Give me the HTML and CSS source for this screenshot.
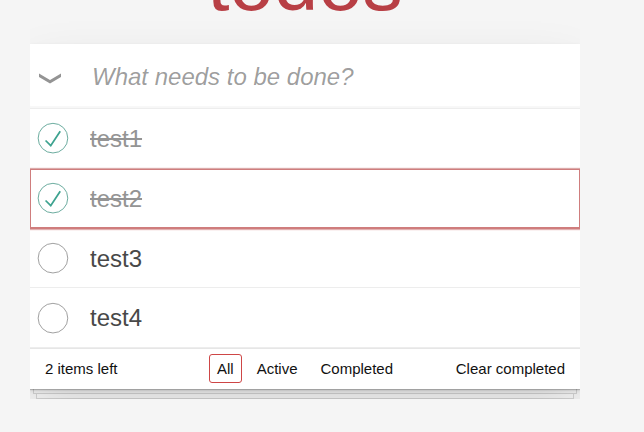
FILE: index.html
```html
<!DOCTYPE html>
<html lang="en">
<head>
<meta charset="utf-8">
<title>todos</title>
<link rel="stylesheet" href="styles.css">
</head>
<body>
<header class="title-area">
  <h1 class="title">todos</h1>
</header>
<section class="todoapp">
  <div class="entry">
    <span class="toggle-all" aria-label="Mark all as complete">
      <svg width="24" height="13" viewBox="0 0 24 13"><path d="M1 1.5 L12 8 L23 1.5 L23 5 L12 11.5 L1 5 Z" fill="#949494"/></svg>
    </span>
    <input class="new-todo" placeholder="What needs to be done?">
  </div>
  <ul class="todo-list">
    <li class="item completed">
      <span class="toggle"><svg width="40" height="40" viewBox="-10 -18 100 135"><circle cx="50" cy="50" r="50" fill="none" stroke="#59A193" stroke-width="3"/><path fill="#3EA390" d="M72 25L42 71 27 56l-4 4 20 20 34-52z"/></svg></span>
      <label class="text">test1</label>
    </li>
    <li class="item completed focused">
      <span class="toggle"><svg width="40" height="40" viewBox="-10 -18 100 135"><circle cx="50" cy="50" r="50" fill="none" stroke="#59A193" stroke-width="3"/><path fill="#3EA390" d="M72 25L42 71 27 56l-4 4 20 20 34-52z"/></svg></span>
      <label class="text">test2</label>
    </li>
    <li class="item">
      <span class="toggle"><svg width="40" height="40" viewBox="-10 -18 100 135"><circle cx="50" cy="50" r="50" fill="none" stroke="#949494" stroke-width="3"/></svg></span>
      <label class="text">test3</label>
    </li>
    <li class="item">
      <span class="toggle"><svg width="40" height="40" viewBox="-10 -18 100 135"><circle cx="50" cy="50" r="50" fill="none" stroke="#949494" stroke-width="3"/></svg></span>
      <label class="text">test4</label>
    </li>
  </ul>
  <footer class="footer">
    <span class="todo-count"><strong class="count">2</strong> items left</span>
    <ul class="filters">
      <li><a class="filter selected" href="#/">All</a></li>
      <li><a class="filter" href="#/active">Active</a></li>
      <li><a class="filter" href="#/completed">Completed</a></li>
    </ul>
    <span class="clear-completed">Clear completed</span>
  </footer>
</section>
<div class="sheet sheet-1"></div>
<div class="sheet sheet-2"></div>
</body>
</html>
```
FILE: styles.css
```css
html, body {
  padding: 0;
}
body {
  margin: 0 0 0 30px;
  width: 550px;
  font: 14px "Liberation Sans", Arial, sans-serif;
  line-height: 1.4em;
  background: #f5f5f5;
  color: #111111;
}
.title-area {
  display: flow-root;
  height: 44px;
}
.title {
  margin: -57px 0 0;
  font-size: 80px;
  line-height: 80px;
  font-weight: 400;
  text-align: center;
  color: #b83f45;
}
.todoapp {
  position: relative;
  z-index: 1;
  background: #fff;
  box-shadow: 0 1px 1px rgba(0, 0, 0, 0.2), 0 2px 4px 0 rgba(0, 0, 0, 0.12), 0 25px 50px 0 rgba(0, 0, 0, 0.12);
}
.entry {
  display: flex;
  align-items: center;
  height: 65px;
  box-shadow: inset 0 -2px 1px rgba(0, 0, 0, 0.03);
  border-bottom: 1px solid #ededed;
  box-sizing: border-box;
}
.toggle-all {
  width: 60px;
  height: 65px;
  display: flex;
  align-items: center;
  justify-content: flex-start;
  padding: 5px 0 0 8px;
  box-sizing: border-box;
}
.toggle-all svg {
  display: block;
}
.new-todo {
  flex: 1;
  border: none;
  outline: none;
  background: transparent;
  font-family: inherit;
  font-size: 24px;
  line-height: 1.4em;
  padding: 2px 16px 0 2px;
  color: #111;
}
.new-todo::placeholder {
  font-style: italic;
  font-weight: 400;
  color: rgba(0, 0, 0, 0.4);
}
.todo-list {
  margin: 0;
  padding: 0;
  list-style: none;
}
.item {
  display: flex;
  align-items: center;
  font-size: 24px;
  border-bottom: 1px solid #ededed;
}
.item.focused {
  border-bottom-color: #cf7d7d;
  box-shadow: inset 0 0 0 1px #cf7d7d, 0 0 1px 1px rgba(207, 125, 125, 0.6);
}
.toggle {
  width: 60px;
  display: flex;
  align-items: center;
  flex: none;
}
.toggle svg {
  display: block;
}
.text {
  padding: 16px 15px 14px 0;
  line-height: 1.2;
  font-weight: 400;
  color: #484848;
}
.completed .text {
  color: #949494;
  text-decoration: line-through;
}
.footer {
  display: grid;
  grid-template-columns: 1fr auto 1fr;
  align-items: center;
  height: 41px;
  box-sizing: border-box;
  padding: 0 15px;
  font-size: 15px;
  color: #111;
  border-top: 1px solid #e6e6e6;
}
.count {
  font-weight: 400;
}
.todo-count {
  justify-self: start;
}
.filters {
  display: flex;
  margin: 0 0 1px;
  padding: 0;
  list-style: none;
  gap: 1px;
}
.filter {
  display: block;
  color: inherit;
  margin: 0 3px;
  padding: 3px 7px;
  line-height: 21px;
  text-decoration: none;
  border: 1px solid transparent;
  border-radius: 3px;
}
.filter.selected {
  border-color: #ce4646;
}
.clear-completed {
  justify-self: end;
}
.sheet {
  height: 4px;
  background: #f7f7f7;
  border: 1px solid #d4d4d4;
  border-top: none;
}
.sheet-1 {
  margin: 0 3px;
}
.sheet-2 {
  margin: 0 6px;
}
```
